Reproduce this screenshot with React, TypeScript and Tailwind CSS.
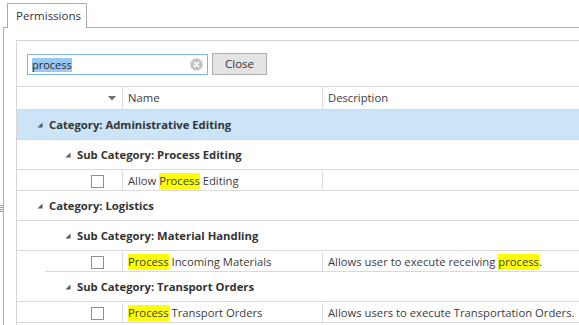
import React from 'react';

const font = { fontFamily: '"Open Sans", "Noto Sans", sans-serif' };

const Hl: React.FC<{ children: React.ReactNode }> = ({ children }) => (
  <span className="bg-[#ffff00] leading-[16px] inline-block">{children}</span>
);

const Expander: React.FC = () => (
  <svg width="6" height="6" viewBox="0 0 6 6" className="shrink-0">
    <polygon points="5.5,0.5 5.5,5.5 0.5,5.5" fill="#595959" />
  </svg>
);

const GroupRow: React.FC<{ label: string; level: number; selected?: boolean }> = ({ label, level, selected }) => (
  <div
    className={`flex h-[30px] items-center border-b border-[#dadada] pt-px ${selected ? 'bg-[#cce4f7]' : 'bg-white'} ${
      level === 0 ? 'pl-[20px]' : 'pl-[48px]'
    }`}
  >
    <Expander />
    <span className="ml-[6px] font-bold text-[#333]">{label}</span>
  </div>
);

const ItemRow: React.FC<{ name: React.ReactNode; description?: React.ReactNode; lineInset?: boolean }> = ({
  name,
  description,
  lineInset,
}) => (
  <div className="relative flex h-[21px] items-center pt-px">
    <div className="flex h-full w-[106px] items-center justify-end border-r border-[#dadada] pr-[18px]">
      <div className="h-[13px] w-[13px] border border-[#8f8f8f] bg-white" />
    </div>
    <div className="flex h-full w-[200px] items-center border-r border-[#dadada] pl-[5px] whitespace-nowrap">{name}</div>
    <div className="flex h-full flex-1 items-center pl-[5px] whitespace-nowrap">{description}</div>
    <div className={`absolute bottom-0 right-0 h-px bg-[#dadada] ${lineInset ? 'left-[28px]' : 'left-0'}`} />
  </div>
);

export default function App() {
  return (
    <div className="relative h-[325px] w-[579px] overflow-hidden bg-white text-[11.25px] text-[#3b3b3b]" style={font}>
      {/* splitter grip */}
      <div className="absolute left-0 top-[205px] flex w-[3px] flex-col gap-[1px]">
        <div className="h-px bg-[#9a9a9a]" />
        <div className="h-px bg-[#9a9a9a]" />
        <div className="h-px bg-[#9a9a9a]" />
        <div className="h-px bg-[#9a9a9a]" />
      </div>

      <div className="pl-[3px] pt-[3px]">
        <div className="flex">
          <div className="relative z-10 -mb-px ml-[4px] flex h-[25px] w-[80px] items-center border border-b-0 border-[#acacac] bg-white pl-[8px] text-[11.5px] text-[#333]">
            Permissions
          </div>
        </div>

        <div className="h-[300px] border-l border-t border-[#acacac] pl-[12px] pt-[12px]">
          <div className="h-full border-l border-t border-[#d5d5d5]">
            {/* search bar */}
            <div className="flex h-[45px] items-start gap-[4px] pl-[10px] pt-[12px]">
              <div className="mt-[1px] flex h-[21px] w-[181px] items-center border border-[#7eb4ea] bg-white pl-[4px] pr-[4px]">
                <span className="bg-[#99c9ef] text-[11px] leading-[14px] text-[#2a2a2a]">process</span>
                <div className="flex-1" />
                <svg width="13" height="13" viewBox="0 0 13 13">
                  <circle cx="6.5" cy="6.5" r="6.2" fill="#c2c2c2" />
                  <path d="M4.3 4.3 L8.7 8.7 M8.7 4.3 L4.3 8.7" stroke="#fff" strokeWidth="1.6" strokeLinecap="round" />
                </svg>
              </div>
              <button className="flex h-[22px] w-[55px] items-center justify-center border border-[#adadad] bg-[#e3e3e3] text-[11.5px] text-[#333]">
                Close
              </button>
            </div>

            {/* grid */}
            <div className="-ml-px border-t border-[#dadada]">
              <div className="flex h-[23px] items-center border-b border-[#dadada]">
                <div className="flex h-full w-[107px] items-center justify-end border-r border-[#dadada] pr-[6px]">
                  <svg width="8" height="5" viewBox="0 0 8 5">
                    <polygon points="0,0 8,0 4,4.5" fill="#707070" />
                  </svg>
                </div>
                <div className="flex h-full w-[200px] items-center border-r border-[#dadada] pl-[5px]">Name</div>
                <div className="flex h-full flex-1 items-center pl-[5px]">Description</div>
              </div>

              <div className="pl-px">
                <GroupRow label="Category: Administrative Editing" level={0} selected />
                <GroupRow label="Sub Category: Process Editing" level={1} />
                <ItemRow
                  name={
                    <span>
                      Allow <Hl>Process</Hl> Editing
                    </span>
                  }
                />
                <GroupRow label="Category: Logistics" level={0} />
                <GroupRow label="Sub Category: Material Handling" level={1} />
                <ItemRow
                  lineInset
                  name={
                    <span>
                      <Hl>Process</Hl> Incoming Materials
                    </span>
                  }
                  description={
                    <span>
                      Allows user to execute receiving <Hl>process</Hl>.
                    </span>
                  }
                />
                <GroupRow label="Sub Category: Transport Orders" level={1} />
                <ItemRow
                  name={
                    <span>
                      <Hl>Process</Hl> Transport Orders
                    </span>
                  }
                  description={<span>Allows users to execute Transportation Orders.</span>}
                />
              </div>
            </div>
          </div>
        </div>
      </div>
    </div>
  );
}
